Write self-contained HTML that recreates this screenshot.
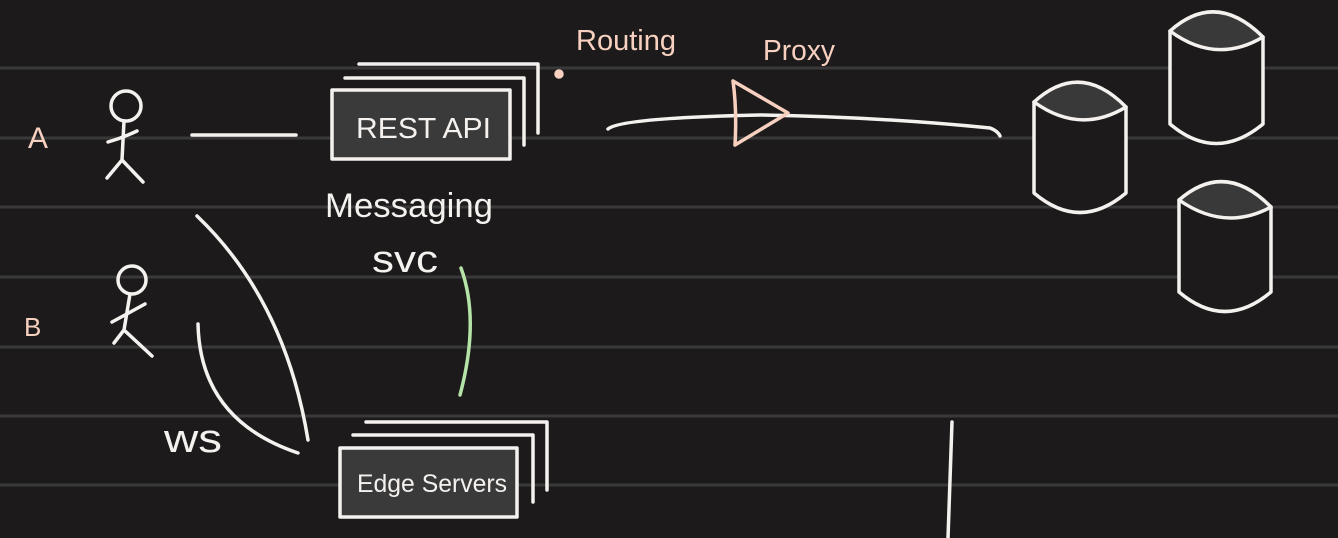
<!DOCTYPE html>
<html><head><style>
html,body{margin:0;padding:0;background:#1c1a1a;width:1338px;height:538px;overflow:hidden}
svg{display:block}
text{font-family:"Liberation Sans",sans-serif}
</style></head><body>
<svg width="1338" height="538" viewBox="0 0 1338 538">
<rect width="1338" height="538" fill="#1c1a1a"/>
<g stroke="#3a3939" stroke-width="3">
<line x1="0" y1="68" x2="1338" y2="68"/>
<line x1="0" y1="138" x2="1338" y2="138"/>
<line x1="0" y1="207" x2="1338" y2="207"/>
<line x1="0" y1="277" x2="1338" y2="277"/>
<line x1="0" y1="347" x2="1338" y2="347"/>
<line x1="0" y1="416" x2="1338" y2="416"/>
<line x1="0" y1="485" x2="1338" y2="485"/>
</g>
<g fill="none" stroke="#f4f1ef" stroke-width="3.5" stroke-linecap="round" stroke-linejoin="round">
<circle cx="126" cy="106" r="15"/>
<path d="M124 121 L122 160 M108 142 Q122 138 137 131 M122 160 L107 178 M122 160 L143 182"/>
<circle cx="132" cy="280" r="14"/>
<path d="M130 294 L124 330 M112 322 Q125 315 145 304 M124 330 L114 343 M124 330 L152 356"/>
<path d="M192 135 L296 135"/>
<path d="M359 64 L538 64 L538 133"/>
<path d="M345 78 L524 78 L524 145"/>
<rect x="332" y="90" width="178" height="69" fill="#3a3a3a"/>
<path d="M366 422 L547 422 L547 490"/>
<path d="M353 435 L533 435 L533 502"/>
<rect x="340" y="448" width="177" height="69" fill="#3a3a3a"/>
<path d="M197 216 Q285 300 308 440"/>
<path d="M198 324 Q200 420 298 453"/>
<path d="M461 268 Q480 320 460 395" stroke="#b5e3a8"/>
<path d="M608 129 Q620 118 760 115 Q880 117 990 128 Q998 131 1000 136"/>
<path d="M733 81 Q737 110 735 145 M733 81 L788 113 L735 145" stroke="#f7d0c0"/>
<circle cx="559" cy="74" r="3" fill="#f7d0c0" stroke="#f7d0c0"/>
<line x1="952" y1="422" x2="948" y2="538"/>
<g fill="#1c1a1a">
<path d="M1034 102 L1034 193 Q1080 232 1126 193 L1126 107"/>
<path d="M1034 102 Q1080 60 1126 107 Q1080 135 1034 102 Z" fill="#3a3939"/>
<path d="M1170 31 L1170 124 Q1216 163 1263 124 L1263 37"/>
<path d="M1170 31 Q1216 -10 1263 37 Q1216 65 1170 31 Z" fill="#3a3939"/>
<path d="M1179 200 L1179 292 Q1225 331 1271 292 L1271 207"/>
<path d="M1179 200 Q1225 160 1271 207 Q1225 232 1179 200 Z" fill="#3a3939"/>
</g>
</g>
<g fill="#f4f1ef">
<text x="356" y="138" font-size="29" textLength="135" lengthAdjust="spacingAndGlyphs">REST API</text>
<text x="357" y="492" font-size="25" textLength="150" lengthAdjust="spacingAndGlyphs">Edge Servers</text>
<text x="325" y="217" font-size="34" textLength="168" lengthAdjust="spacingAndGlyphs">Messaging</text>
<text x="372" y="272" font-size="38" textLength="66" lengthAdjust="spacingAndGlyphs">svc</text>
<text x="164" y="452" font-size="40" textLength="58" lengthAdjust="spacingAndGlyphs">ws</text>
</g>
<g fill="#f7d0c0">
<text x="28" y="148" font-size="30">A</text>
<text x="24" y="336" font-size="26">B</text>
<text x="576" y="50" font-size="29" textLength="100" lengthAdjust="spacingAndGlyphs">Routing</text>
<text x="763" y="60" font-size="29" textLength="72" lengthAdjust="spacingAndGlyphs">Proxy</text>
</g>
</svg>
</body></html>
